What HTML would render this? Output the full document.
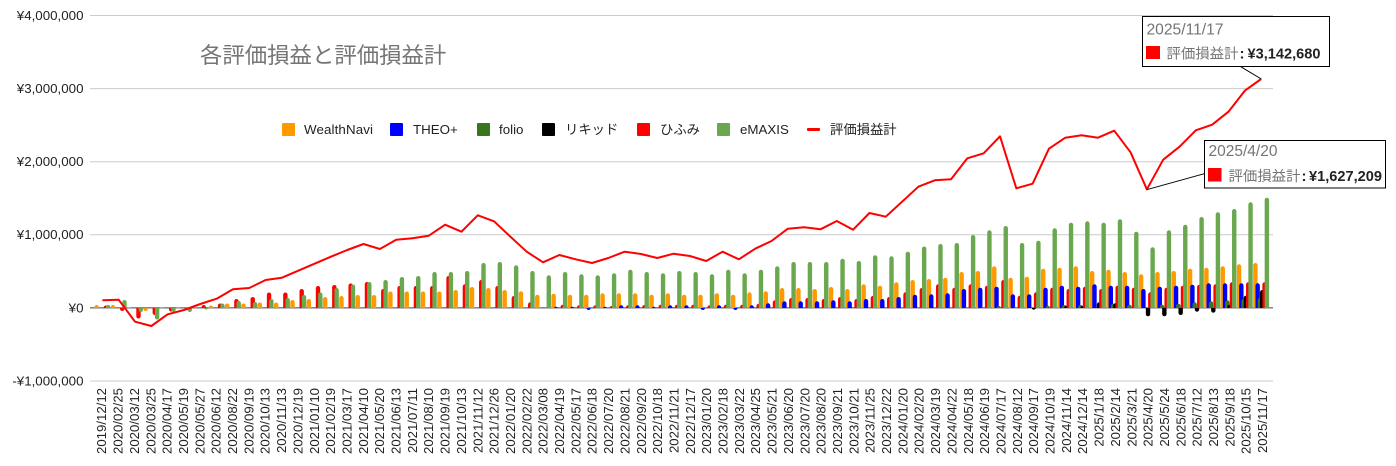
<!DOCTYPE html>
<html lang="ja">
<head>
<meta charset="utf-8">
<title>各評価損益と評価損益計</title>
<style>
html,body{margin:0;padding:0;background:#fff;width:1396px;height:466px;overflow:hidden}
svg{display:block}
text{font-family:"Liberation Sans","Noto Sans CJK JP",sans-serif;font-size:13.33px;fill:#222}
.y text{text-anchor:end}
.x text{text-anchor:end;font-size:13.2px}
.b{fill:none;stroke-width:4.4;stroke-linecap:round}
.tt{fill:#757575;font-size:16px}
.tl{fill:#757575;font-size:14.4px}
.tv{fill:#222;font-size:15px;font-weight:bold}
</style>
</head>
<body>
<svg width="1396" height="466" viewBox="0 0 1396 466" xmlns="http://www.w3.org/2000/svg">
<defs>
<clipPath id="up"><rect x="80" y="0" width="1210" height="308"/></clipPath>
<clipPath id="dn"><rect x="80" y="308" width="1210" height="80"/></clipPath>
</defs>
<rect width="1396" height="466" fill="#fff"/>

<!-- grid -->
<g stroke="#ccc" stroke-width="1">
<path d="M90 15.5H1273M90 88.6H1273M90 161.7H1273M90 234.8H1273M90 381H1273"/>
</g>
<path d="M90 307.9H1273" stroke="#444" stroke-width="1"/>

<!-- y axis -->
<g class="y">
<text x="83.5" y="20">¥4,000,000</text>
<text x="83.5" y="93">¥3,000,000</text>
<text x="83.5" y="166">¥2,000,000</text>
<text x="83.5" y="239">¥1,000,000</text>
<text x="83.5" y="312.5">¥0</text>
<text x="83.5" y="385.5">-¥1,000,000</text>
</g>

<!-- title -->
<text x="200" y="63" style="font-size:22.4px;fill:#757575">各評価損益と評価損益計</text>

<!-- legend -->
<g>
<rect x="282" y="123" width="13" height="13" rx="1" fill="#ff9900"/>
<text x="304" y="134" textLength="69">WealthNavi</text>
<rect x="390" y="123" width="13" height="13" rx="1" fill="#0000ff"/>
<text x="413" y="134">THEO+</text>
<rect x="477" y="123" width="13" height="13" rx="1" fill="#38761d"/>
<text x="499" y="134">folio</text>
<rect x="542" y="123" width="13" height="13" rx="1" fill="#000"/>
<text x="565" y="134">リキッド</text>
<rect x="637" y="123" width="13" height="13" rx="1" fill="#ff0000"/>
<text x="660" y="134">ひふみ</text>
<rect x="717" y="123" width="13" height="13" rx="1" fill="#6aa84f"/>
<text x="740" y="134">eMAXIS</text>
<rect x="807" y="128" width="13" height="3" rx="1" fill="#ff0000"/>
<text x="830" y="134">評価損益計</text>
</g>

<!-- bars: WealthNavi -->
<g class="b" stroke="#ff9900">
<path clip-path="url(#up)" d="M96.65 310.2v-3m16.32 3v-3m16.32 3v-1m16.32 1m16.32 0v-1m16.32 1v-1m16.32 1v-.5m16.32 .5v-2.5m16.32 2.5v-4.5m16.32 4.5v-4.5m16.32 4.5v-5.5m16.32 5.5v-5.5m16.32 5.5v-8m16.32 8v-9m16.32 9v-11m16.32 11v-12m16.32 12v-13m16.32 13v-13m16.32 13v-16.5m16.32 16.5v-16.5m16.32 16.5v-16.5m16.32 16.5v-16.5m16.32 16.5v-18m16.32 18v-21m16.32 21v-20m16.32 20v-18m16.32 18v-16.7m16.32 16.7v-13.3m16.32 13.3v-14.3m16.32 14.3v-13.3m16.32 13.3v-13.3m16.32 13.3v-14.7m16.32 14.7v-14.7m16.32 14.7v-14.7m16.32 14.7v-13.3m16.32 13.3v-14.7m16.32 14.7v-13.3m16.32 13.3v-13.3m16.32 13.3v-14.7m16.32 14.7v-13.3m16.32 13.3v-15.7m16.32 15.7v-16.7m16.32 16.7v-20m16.32 20v-20m16.32 20v-19m16.32 19v-21m16.32 21v-19m16.32 19v-23.7m16.32 23.7v-22.3m16.32 22.3v-25.7m16.32 25.7v-28m16.32 28v-29m16.32 29v-30.3m16.32 30.3v-36m16.32 36v-37m16.32 37v-41.7m16.32 41.7v-30.3m16.32 30.3v-31.3m16.32 31.3v-39.3m16.32 39.3v-40.3m16.32 40.3v-41.7m16.32 41.7v-37m16.32 37v-38.3m16.32 38.3v-36m16.32 36v-33.7m16.32 33.7v-36m16.32 36v-37m16.32 37v-39.3m16.32 39.3v-40.3m16.32 40.3v-41.7m16.32 41.7v-43.7m16.32 43.7v-45"/>
<path clip-path="url(#dn)" d="M145.61 305.8v3"/>
</g>
<!-- bars: THEO+ -->
<g class="b" stroke="#0000ff">
<path clip-path="url(#up)" d="M555.91 310.2v-1.3m16.32 1.3v-1.3m16.32 1.3m16.32 0v-1.3m16.32 1.3v-2.7m16.32 2.7v-2.7m16.32 2.7v-1.3m16.32 1.3v-2.7m16.32 2.7v-2.7m16.32 2.7m16.32 0v-2.7m16.32 2.7m16.32 0v-2.7m16.32 2.7v-4.7m16.32 4.7v-6.7m16.32 6.7v-6.7m16.32 6.7v-6.7m16.32 6.7v-7.7m16.32 7.7v-6.7m16.32 6.7v-9m16.32 9v-9m16.32 9v-11m16.32 11v-13.3m16.32 13.3v-13.7m16.32 13.7v-14.7m16.32 14.7v-19m16.32 19v-20.3m16.32 20.3v-21.3m16.32 21.3v-13.7m16.32 13.7v-13.7m16.32 13.7v-20.3m16.32 20.3v-22.3m16.32 22.3v-21.3m16.32 21.3v-23.7m16.32 23.7v-22.3m16.32 22.3v-22.3m16.32 22.3v-19m16.32 19v-21.3m16.32 21.3v-22.3m16.32 22.3v-23.3m16.32 23.3v-24.7m16.32 24.7v-24.7m16.32 24.7v-24.7m16.32 24.7v-24.7"/>
<path clip-path="url(#dn)" d="M588.55 305.8v2M702.79 305.8v2M735.43 305.8v2"/>
</g>
<!-- bars: folio -->
<g class="b" stroke="#38761d">
<path clip-path="url(#up)" d="M949.89 310.2v-.7M966.21 310.2v-.7M982.53 310.2v-.7M998.85 310.2v-2M1015.17 310.2v-.7M1047.81 310.2v-2.3M1064.13 310.2v-3M1080.45 310.2v-3M1113.09 310.2v-4.3M1129.41 310.2v-3.3M1162.05 310.2v-3.3M1178.37 310.2v-4.3M1194.69 310.2v-5.7M1211.01 310.2v-6.7M1227.33 310.2v-7.7M1243.65 310.2v-9M1259.97 310.2v-10.3"/>
</g>
<!-- bars: リキッド -->
<g class="b" stroke="#000">
<path clip-path="url(#up)" d="M1066.43 310.2v-2.3M1082.75 310.2v-2.3M1099.07 310.2v-5.7M1115.39 310.2v-4.7M1229.63 310.2v-3.3M1245.95 310.2v-12.3M1262.27 310.2v-18"/>
<path clip-path="url(#dn)" d="M1033.79 305.8v1.7M1148.03 305.8v8.3M1164.35 305.8v8.3M1180.67 305.8v7M1196.99 305.8v3.7M1213.31 305.8v4.7"/>
</g>
<!-- bars: ひふみ -->
<g class="b" stroke="#ff0000">
<path clip-path="url(#up)" d="M105.85 310.2v-2.5m16.32 2.5m16.32 0m16.32 0m16.32 0m16.32 0m16.32 0v-3m16.32 3v-4.5m16.32 4.5v-9m16.32 9v-11m16.32 11v-15.5m16.32 15.5v-15.5m16.32 15.5v-19m16.32 19v-22m16.32 22v-23m16.32 23v-24.5m16.32 24.5v-26m16.32 26v-19m16.32 19v-22m16.32 22v-22m16.32 22v-22m16.32 22v-32m16.32 32v-23.7m16.32 23.7v-28m16.32 28v-22m16.32 22v-12m16.32 12v-5.7m16.32 5.7v-.7m16.32 .7v-3.3m16.32 3.3v-2.7m16.32 2.7v-2.7m16.32 2.7v-2m16.32 2v-2.7m16.32 2.7v-3m16.32 3v-3.3m16.32 3.3v-3.3m16.32 3.3v-3.3m16.32 3.3v-2.7m16.32 2.7v-3.3m16.32 3.3v-3.3m16.32 3.3v-4.3m16.32 4.3v-7.7m16.32 7.7v-10m16.32 10v-10m16.32 10v-9m16.32 9v-11m16.32 11v-9m16.32 9v-12m16.32 12v-11m16.32 11v-15.7m16.32 15.7v-20m16.32 20v-23.7m16.32 23.7v-20.3m16.32 20.3v-23.7m16.32 23.7v-22.3m16.32 22.3v-28m16.32 28v-12.3m16.32 12.3v-15.7m16.32 15.7v-20.3m16.32 20.3v-19m16.32 19v-21.3m16.32 21.3v-19m16.32 19v-22.3m16.32 22.3v-20.3m16.32 20.3v-15.7m16.32 15.7v-20.3m16.32 20.3v-22.3m16.32 22.3v-23.3m16.32 23.3v-23.7m16.32 23.7v-25.7m16.32 25.7v-25.7m16.32 25.7v-25.7"/>
<path clip-path="url(#dn)" d="M122.17 305.8v3M138.49 305.8v10.5M154.81 305.8v7M171.13 305.8v3.5M187.45 305.8v1"/>
</g>
<!-- bars: eMAXIS -->
<g class="b" stroke="#6aa84f">
<path clip-path="url(#up)" d="M108.15 310.2v-3m16.32 3v-8m16.32 8m16.32 0m16.32 0m16.32 0m16.32 0m16.32 0v-4.5m16.32 4.5v-7m16.32 7v-6m16.32 6v-9m16.32 9v-10m16.32 10v-13m16.32 13v-15.5m16.32 15.5v-20m16.32 20v-23.5m16.32 23.5v-26m16.32 26v-28m16.32 28v-31m16.32 31v-32m16.32 32v-36m16.32 36v-36m16.32 36v-37m16.32 37v-45m16.32 45v-46m16.32 46v-42.7m16.32 42.7v-37m16.32 37v-32.7m16.32 32.7v-36m16.32 36v-33.7m16.32 33.7v-32.7m16.32 32.7v-34.7m16.32 34.7v-38.3m16.32 38.3v-36m16.32 36v-34.7m16.32 34.7v-37m16.32 37v-36m16.32 36v-33.7m16.32 33.7v-38.3m16.32 38.3v-34.7m16.32 34.7v-38.3m16.32 38.3v-41.7m16.32 41.7v-46m16.32 46v-46m16.32 46v-46m16.32 46v-49.3m16.32 49.3v-47m16.32 47v-52.7m16.32 52.7v-51.7m16.32 51.7v-56.3m16.32 56.3v-61.5m16.32 61.5v-64m16.32 64v-65m16.32 65v-73m16.32 73v-77.7m16.32 77.7v-82m16.32 82v-65m16.32 65v-67.3m16.32 67.3v-79.7m16.32 79.7v-85.3m16.32 85.3v-86.7m16.32 86.7v-85.3m16.32 85.3v-88.7m16.32 88.7v-76.3m16.32 76.3v-60.7m16.32 60.7v-77.7m16.32 77.7v-83.3m16.32 83.3v-91m16.32 91v-95.7m16.32 95.7v-99m16.32 99v-105.7m16.32 105.7v-110.3"/>
<path clip-path="url(#dn)" d="M140.79 305.8v4M157.11 305.8v11.5M173.43 305.8v4M189.75 305.8v4M206.07 305.8v1.5"/>
</g>

<!-- line -->
<polyline fill="none" stroke="#ff0000" stroke-width="2" stroke-linejoin="round" points="102.4,300.3 118.72,299.8 135.04,321.7 151.36,326 167.68,314.3 184,310 200.32,304 216.64,298.7 232.96,289.3 249.28,288 265.6,280 281.92,277.7 298.24,270.7 314.56,263.7 330.88,256.7 347.2,250 363.52,244 379.84,249 396.16,239.7 412.48,238.3 428.8,235.7 445.12,224.7 461.44,231.7 477.76,215.3 494.08,221.3 510.4,236.7 526.72,251.7 543.04,262.3 559.36,255 575.68,259.3 592,263 608.32,258 624.64,251.7 640.96,254 657.28,258 673.6,253.7 689.92,256 706.24,261 722.56,251.7 738.88,259.3 755.2,248.7 771.52,241 787.84,228.7 804.16,227.3 820.48,229.3 836.8,221 853.12,229.7 869.44,213 885.76,216.7 902.08,201.7 918.4,186.7 934.72,180.3 951.04,179.3 967.36,158.3 983.68,153.3 1000,136.3 1016.32,188.3 1032.64,183.7 1048.96,148.7 1065.28,137.7 1081.6,135.3 1097.92,137.7 1114.24,130.7 1130.56,152.3 1146.88,189.3 1163.2,159.7 1179.52,146.7 1195.84,130.3 1212.16,124.7 1228.48,111.7 1244.8,90.7 1261.12,79"/>

<!-- x axis -->
<g class="x">
<text transform="translate(106.2 388)rotate(-90)">2019/12/12</text>
<text transform="translate(122.55 388)rotate(-90)">2020/02/25</text>
<text transform="translate(138.9 388)rotate(-90)">2020/03/12</text>
<text transform="translate(155.25 388)rotate(-90)">2020/03/25</text>
<text transform="translate(171.6 388)rotate(-90)">2020/04/17</text>
<text transform="translate(187.95 388)rotate(-90)">2020/05/19</text>
<text transform="translate(204.3 388)rotate(-90)">2020/05/27</text>
<text transform="translate(220.65 388)rotate(-90)">2020/06/12</text>
<text transform="translate(237 388)rotate(-90)">2020/08/22</text>
<text transform="translate(253.35 388)rotate(-90)">2020/09/19</text>
<text transform="translate(269.7 388)rotate(-90)">2020/10/13</text>
<text transform="translate(286.05 388)rotate(-90)">2020/11/13</text>
<text transform="translate(302.4 388)rotate(-90)">2020/12/19</text>
<text transform="translate(318.75 388)rotate(-90)">2021/01/10</text>
<text transform="translate(335.1 388)rotate(-90)">2021/02/19</text>
<text transform="translate(351.45 388)rotate(-90)">2021/03/17</text>
<text transform="translate(367.8 388)rotate(-90)">2021/04/10</text>
<text transform="translate(384.15 388)rotate(-90)">2021/05/20</text>
<text transform="translate(400.5 388)rotate(-90)">2021/06/13</text>
<text transform="translate(416.85 388)rotate(-90)">2021/07/11</text>
<text transform="translate(433.2 388)rotate(-90)">2021/08/10</text>
<text transform="translate(449.55 388)rotate(-90)">2021/09/19</text>
<text transform="translate(465.9 388)rotate(-90)">2021/10/13</text>
<text transform="translate(482.25 388)rotate(-90)">2021/11/12</text>
<text transform="translate(498.6 388)rotate(-90)">2021/12/26</text>
<text transform="translate(514.95 388)rotate(-90)">2022/01/20</text>
<text transform="translate(531.3 388)rotate(-90)">2022/02/22</text>
<text transform="translate(547.65 388)rotate(-90)">2022/03/08</text>
<text transform="translate(564 388)rotate(-90)">2022/04/19</text>
<text transform="translate(580.35 388)rotate(-90)">2022/05/17</text>
<text transform="translate(596.7 388)rotate(-90)">2022/06/18</text>
<text transform="translate(613.05 388)rotate(-90)">2022/07/20</text>
<text transform="translate(629.4 388)rotate(-90)">2022/08/21</text>
<text transform="translate(645.75 388)rotate(-90)">2022/09/20</text>
<text transform="translate(662.1 388)rotate(-90)">2022/10/18</text>
<text transform="translate(678.45 388)rotate(-90)">2022/11/21</text>
<text transform="translate(694.8 388)rotate(-90)">2022/12/17</text>
<text transform="translate(711.15 388)rotate(-90)">2023/01/20</text>
<text transform="translate(727.5 388)rotate(-90)">2023/02/18</text>
<text transform="translate(743.85 388)rotate(-90)">2023/03/22</text>
<text transform="translate(760.2 388)rotate(-90)">2023/04/25</text>
<text transform="translate(776.55 388)rotate(-90)">2023/05/21</text>
<text transform="translate(792.9 388)rotate(-90)">2023/06/20</text>
<text transform="translate(809.25 388)rotate(-90)">2023/07/20</text>
<text transform="translate(825.6 388)rotate(-90)">2023/08/20</text>
<text transform="translate(841.95 388)rotate(-90)">2023/09/21</text>
<text transform="translate(858.3 388)rotate(-90)">2023/10/21</text>
<text transform="translate(874.65 388)rotate(-90)">2023/11/25</text>
<text transform="translate(891 388)rotate(-90)">2023/12/22</text>
<text transform="translate(907.35 388)rotate(-90)">2024/01/20</text>
<text transform="translate(923.7 388)rotate(-90)">2024/02/20</text>
<text transform="translate(940.05 388)rotate(-90)">2024/03/19</text>
<text transform="translate(956.4 388)rotate(-90)">2024/04/22</text>
<text transform="translate(972.75 388)rotate(-90)">2024/05/18</text>
<text transform="translate(989.1 388)rotate(-90)">2024/06/19</text>
<text transform="translate(1005.45 388)rotate(-90)">2024/07/17</text>
<text transform="translate(1021.8 388)rotate(-90)">2024/08/12</text>
<text transform="translate(1038.15 388)rotate(-90)">2024/09/17</text>
<text transform="translate(1054.5 388)rotate(-90)">2024/10/19</text>
<text transform="translate(1070.85 388)rotate(-90)">2024/11/14</text>
<text transform="translate(1087.2 388)rotate(-90)">2024/12/14</text>
<text transform="translate(1103.55 388)rotate(-90)">2025/1/18</text>
<text transform="translate(1119.9 388)rotate(-90)">2025/2/14</text>
<text transform="translate(1136.25 388)rotate(-90)">2025/3/21</text>
<text transform="translate(1152.6 388)rotate(-90)">2025/4/20</text>
<text transform="translate(1168.95 388)rotate(-90)">2025/5/24</text>
<text transform="translate(1185.3 388)rotate(-90)">2025/6/18</text>
<text transform="translate(1201.65 388)rotate(-90)">2025/7/12</text>
<text transform="translate(1218 388)rotate(-90)">2025/8/13</text>
<text transform="translate(1234.35 388)rotate(-90)">2025/9/18</text>
<text transform="translate(1250.7 388)rotate(-90)">2025/10/15</text>
<text transform="translate(1267.05 388)rotate(-90)">2025/11/17</text>
</g>

<!-- tooltip 1 -->
<path d="M1240.7 66.7L1261.3 79" stroke="#000" stroke-width="1" fill="none"/>
<rect x="1142.5" y="16.5" width="187" height="50" fill="#fff" stroke="#000" stroke-width="1"/>
<text class="tt" x="1146.5" y="34.5" textLength="77" lengthAdjust="spacingAndGlyphs">2025/11/17</text>
<rect x="1146" y="46" width="14" height="13" fill="#ff0000"/>
<text class="tl" x="1166.5" y="58.5">評価損益計</text>
<text class="tv" x="1239.5" y="58.5">:</text>
<text class="tv" x="1247.5" y="58.5" textLength="73" lengthAdjust="spacingAndGlyphs">¥3,142,680</text>

<!-- tooltip 2 -->
<path d="M1146.7 189.7L1204.3 173.7" stroke="#000" stroke-width="1" fill="none"/>
<rect x="1204.5" y="140.5" width="181" height="47.5" fill="#fff" stroke="#000" stroke-width="1"/>
<text class="tt" x="1208.5" y="156" textLength="69" lengthAdjust="spacingAndGlyphs">2025/4/20</text>
<rect x="1208" y="168" width="13.5" height="13.5" fill="#ff0000"/>
<text class="tl" x="1228.5" y="181">評価損益計</text>
<text class="tv" x="1301.5" y="181">:</text>
<text class="tv" x="1309" y="181" textLength="73" lengthAdjust="spacingAndGlyphs">¥1,627,209</text>
</svg>
</body>
</html>
